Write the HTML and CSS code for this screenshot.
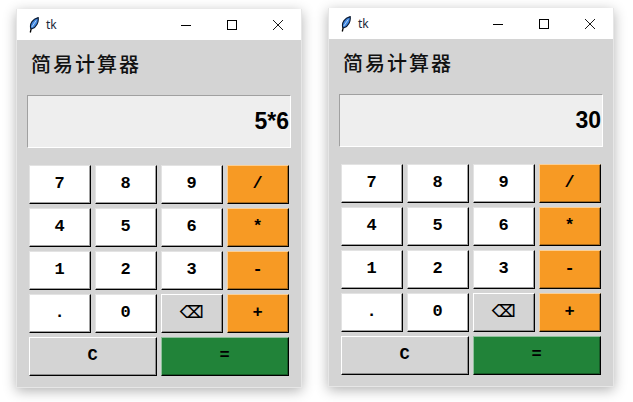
FILE: index.html
```html
<!DOCTYPE html>
<html lang="en">
<head>
    <meta charset="UTF-8">
    <meta name="viewport" content="width=device-width, initial-scale=1.0">
    <title>tk calculators</title>
    <link rel="stylesheet" href="styles.css">
</head>
<body>
    <svg class="defs" width="0" height="0">
        <symbol id="feather" viewBox="0 0 10 16">
            <path d="M1.3 15.5 L2.6 10" fill="none" stroke="#000" stroke-width="1.3"/>
            <path d="M1.8 11.5 C0.4 7 3.5 2 9.2 0.6 C9.8 5 7.6 10.5 3 11.8 Z" fill="#3f86e0" stroke="#0c1a30" stroke-width="1.1"/>
            <path d="M2.8 10 L7.2 3.5" fill="none" stroke="#bcd8f6" stroke-width="0.9"/>
        </symbol>
        <symbol id="win-min" viewBox="0 0 10 10">
            <path d="M0 5.5 H10" stroke="#000" fill="none"/>
        </symbol>
        <symbol id="win-max" viewBox="0 0 10 10">
            <rect x="0.5" y="0.5" width="9" height="9" stroke="#000" fill="none"/>
        </symbol>
        <symbol id="win-close" viewBox="0 0 10 10">
            <path d="M0 0 L10 10 M10 0 L0 10" stroke="#000" fill="none" stroke-width="0.9"/>
        </symbol>
    </svg>

    <!-- Left window: expression typed in -->
    <div class="window window-left">
        <div class="titlebar">
            <svg class="feather"><use href="#feather"/></svg>
            <span class="title">tk</span>
            <div class="controls">
                <svg class="ctrl"><use href="#win-min"/></svg>
                <svg class="ctrl"><use href="#win-max"/></svg>
                <svg class="ctrl"><use href="#win-close"/></svg>
            </div>
        </div>
        <h1 class="heading">简易计算器</h1>
        <div class="display">5*6</div>
        <div class="keypad">
            <button class="key">7</button>
            <button class="key">8</button>
            <button class="key">9</button>
            <button class="key op">/</button>
            <button class="key">4</button>
            <button class="key">5</button>
            <button class="key">6</button>
            <button class="key op">*</button>
            <button class="key">1</button>
            <button class="key">2</button>
            <button class="key">3</button>
            <button class="key op">-</button>
            <button class="key">.</button>
            <button class="key">0</button>
            <button class="key gray back">⌫</button>
            <button class="key op">+</button>
            <button class="key gray wide">C</button>
            <button class="key equals wide">=</button>
        </div>
    </div>

    <!-- Right window: result -->
    <div class="window window-right">
        <div class="titlebar">
            <svg class="feather"><use href="#feather"/></svg>
            <span class="title">tk</span>
            <div class="controls">
                <svg class="ctrl"><use href="#win-min"/></svg>
                <svg class="ctrl"><use href="#win-max"/></svg>
                <svg class="ctrl"><use href="#win-close"/></svg>
            </div>
        </div>
        <h1 class="heading">简易计算器</h1>
        <div class="display">30</div>
        <div class="keypad">
            <button class="key">7</button>
            <button class="key">8</button>
            <button class="key">9</button>
            <button class="key op">/</button>
            <button class="key">4</button>
            <button class="key">5</button>
            <button class="key">6</button>
            <button class="key op">*</button>
            <button class="key">1</button>
            <button class="key">2</button>
            <button class="key">3</button>
            <button class="key op">-</button>
            <button class="key">.</button>
            <button class="key">0</button>
            <button class="key gray back">⌫</button>
            <button class="key op">+</button>
            <button class="key gray wide">C</button>
            <button class="key equals wide">=</button>
        </div>
    </div>
</body>
</html>
```

FILE: styles.css
```css
html, body {
    margin: 0;
    height: 100%;
    overflow: hidden;
}

body {
    background-color: #fff;
    position: relative;
    font-family: "Liberation Sans", sans-serif;
}

.defs {
    position: absolute;
}

/* Windows sit on a free desktop */
.window {
    position: absolute;
    width: 286px;
    height: 379px;
    box-sizing: border-box;
    background-color: #d4d4d4;
    border: 1px solid #e6e6e6;
    border-top: none;
    box-shadow: 0 3px 12px rgba(0, 0, 0, 0.3);
    display: flex;
    flex-direction: column;
}

.window-left {
    left: 16px;
    top: 9px;
}

.window-right {
    left: 328px;
    top: 8px;
}

/* Title bar */
.titlebar {
    height: 31px;
    flex: none;
    background-color: #fff;
    display: flex;
    align-items: center;
    padding-left: 12px;
}

.feather {
    width: 10px;
    height: 16px;
    flex: none;
}

.title {
    margin-left: 7px;
    font-family: "Noto Sans", sans-serif;
    font-size: 12px;
    color: #1c2a3a;
}

.controls {
    margin-left: auto;
    display: flex;
    gap: 36px;
    padding-right: 18px;
}

.ctrl {
    width: 10px;
    height: 10px;
}

/* Heading */
.heading {
    margin: 0;
    height: 55px;
    flex: none;
    box-sizing: border-box;
    padding: 9px 0 0 14px;
    font-family: "Noto Sans CJK SC", sans-serif;
    font-size: 20px;
    font-weight: 500;
    letter-spacing: 2px;
    line-height: 30px;
    color: #111;
}

/* Display */
.display {
    margin: 0 10px;
    height: 53px;
    flex: none;
    box-sizing: border-box;
    background-color: #eee;
    border: 1px solid;
    border-color: #a0a0a0 #fff #fff #a0a0a0;
    padding-right: 1px;
    display: flex;
    align-items: center;
    justify-content: flex-end;
    font-size: 23px;
    font-weight: bold;
    color: #000;
}

/* Keypad */
.keypad {
    margin: 17px 12px 0;
    display: grid;
    grid-template-columns: repeat(4, 62px);
    grid-auto-rows: 39px;
    gap: 4px;
}

.key {
    margin: 0;
    padding: 0 1px 3px 0;
    background-color: #fff;
    border: 1px solid;
    border-color: #e3e3e3 #000 #000 #e3e3e3;
    box-shadow: inset -1px -1px 0 #a0a0a0;
    font-family: "Liberation Mono", monospace;
    font-size: 17px;
    font-weight: bold;
    color: #000;
}

.key.op {
    background-color: #f79a24;
    border-color: #fbcf95 #000 #000 #fbcf95;
    box-shadow: inset -1px -1px 0 #a86a1a;
}

.key.gray {
    background-color: #d4d4d4;
    border-color: #fff #000 #000 #fff;
    box-shadow: inset -1px -1px 0 #8c8c8c;
}

.key.equals {
    background-color: #218339;
    border-color: #8fc19c #000 #000 #8fc19c;
    box-shadow: inset -1px -1px 0 #155a26;
}

.key.wide {
    grid-column: span 2;
}

.key.back {
    font-family: "DejaVu Sans", sans-serif;
    font-weight: bold;
    font-size: 17px;
}
```
